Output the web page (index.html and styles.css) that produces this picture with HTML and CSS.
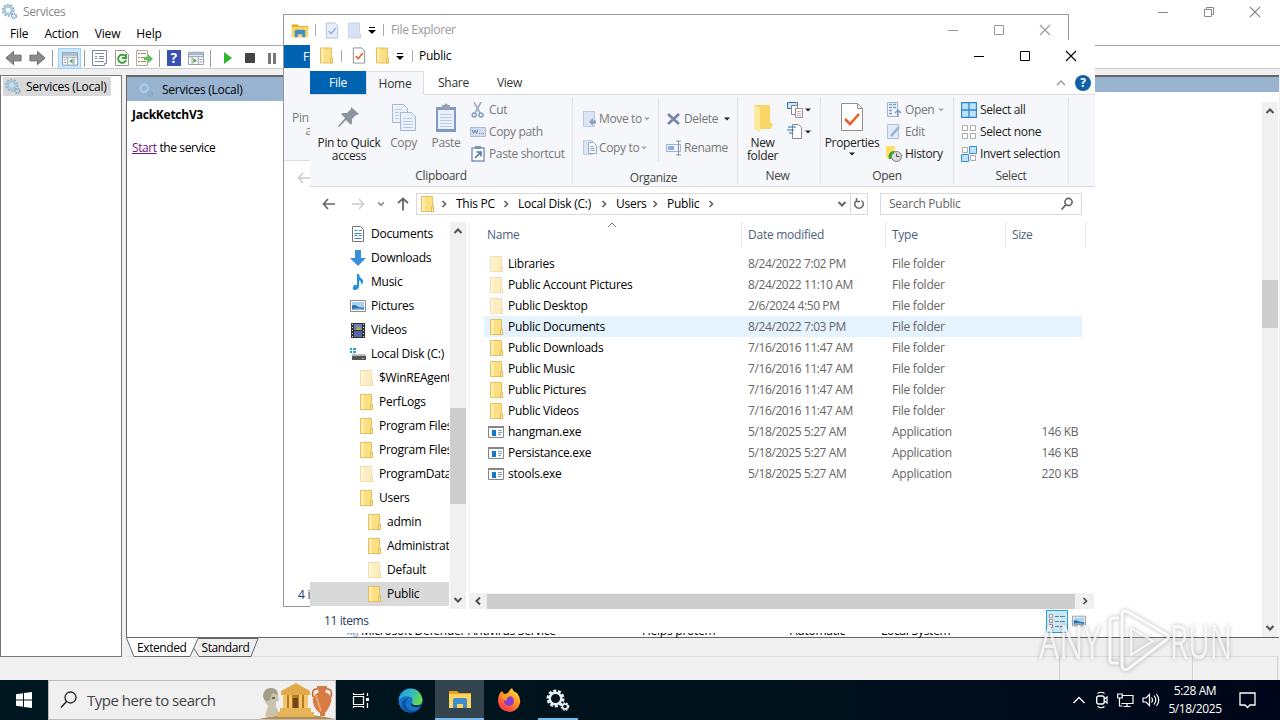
FILE: index.html
```
<!DOCTYPE html>
<html lang="en">

<head>
    <meta charset="UTF-8">
    <meta name="viewport" content="width=device-width, initial-scale=1.0">
    <title>Services</title>
    <link rel="stylesheet" href="styles.css">
</head>

<body>
    <!-- shared icons -->
    <svg class="sprite">
        <symbol id="folder" viewBox="0 0 16 16"><path d="M2.500.500h11v9.500l1 1v4.500h-12z" fill="#fbdf83" stroke="#e3b955" stroke-width=".9"/><path d="M3 1h3v14H3z" fill="#ffecab"/><path d="M12.500 11l1.500-1.500.8 6h-2.300z" fill="#ffeaa5" stroke="#d9aa43" stroke-width=".7"/></symbol>
        <symbol id="gear" viewBox="0 0 18 18"><circle cx="7" cy="7" r="5.800" fill="none" stroke="#8bb0c9" stroke-width="3" stroke-dasharray="2.200 1.400"/><circle cx="7" cy="7" r="4.300" fill="none" stroke="#a9c9de" stroke-width="3"/><circle cx="13.500" cy="13.500" r="2.500" fill="none" stroke="#7fa5bf" stroke-width="2.200" stroke-dasharray="1.300 .8"/></symbol>
        <symbol id="explorer" viewBox="0 0 24 20"><path d="M1 2h8l2 2h12v4H1z" fill="#e8a317"/><path d="M1 5h22v14H1z" fill="#fcd462"/><path d="M5 19v-8q0-2 2-2h10q2 0 2 2v8h-4v-4H9v4z" fill="#3f8ecb"/></symbol>
        <symbol id="check" viewBox="0 0 16 18"><path d="M2 1h9l3 3v13H2z" fill="#fff" stroke="#868b93"/><path d="M4.500 9.500l2.500 3 5-6" fill="none" stroke="#e0642c" stroke-width="1.700"/></symbol>
        <symbol id="check-off" viewBox="0 0 16 18"><path d="M2 1h9l3 3v13H2z" fill="#e6eefa" stroke="#b3c2da"/><path d="M4.500 9.500l2.500 3 5-6" fill="none" stroke="#9db3d8" stroke-width="1.700"/></symbol>
        <symbol id="folder-off" viewBox="0 0 16 16"><path d="M2.500.500h11v9.500l1 1v4.500h-12z" fill="#d6e2f4" stroke="#c3d2ea" stroke-width=".9"/></symbol>
        <symbol id="caret" viewBox="0 0 8 8"><path d="M1 2.500h6L4 5.500z" fill="currentColor"/></symbol>
        <symbol id="qat" viewBox="0 0 8 10"><path d="M1 2h6v1H1zM0 5h8L4 9z" fill="currentColor"/></symbol>
        <symbol id="up" viewBox="0 0 10 10"><path d="M1.500 7L5 3.500 8.500 7" fill="none" stroke="currentColor" stroke-width="2"/></symbol>
        <symbol id="down" viewBox="0 0 10 10"><path d="M1.500 3L5 6.500 8.500 3" fill="none" stroke="currentColor" stroke-width="2"/></symbol>
        <symbol id="right" viewBox="0 0 10 10"><path d="M3.500 2L6.500 5l-3 3" fill="none" stroke="currentColor" stroke-width="1.700"/></symbol>
        <symbol id="left" viewBox="0 0 10 10"><path d="M7 1.500L3.500 5 7 8.500" fill="none" stroke="currentColor" stroke-width="2"/></symbol>
        <symbol id="min" viewBox="0 0 12 12"><path d="M1 6.500h10" stroke="currentColor"/></symbol>
        <symbol id="max" viewBox="0 0 12 12"><path d="M1.500 1.500h9v9h-9z" fill="none" stroke="currentColor"/></symbol>
        <symbol id="restore" viewBox="0 0 12 12"><path d="M1.500 3.500h7v7h-7zM3.500 3.500v-2h7v7h-2" fill="none" stroke="currentColor"/></symbol>
        <symbol id="close" viewBox="0 0 12 12"><path d="M1 1l10 10M11 1L1 11" stroke="currentColor" stroke-width="1.100"/></symbol>
        <symbol id="exe" viewBox="0 0 16 16"><path d="M.5 2.500h15v11H.5z" fill="#fff" stroke="#858585"/><path d="M0 2h16v2H0z" fill="#858585"/><path d="M4 6h4v6H4z" fill="#1479c8"/><path d="M10 6.500h4M10 8.500h4M10 10.500h3" stroke="#7c9fc4"/></symbol>
        <symbol id="picture" viewBox="0 0 16 16"><path d="M.5 2.500h15v11H.5z" fill="#fff" stroke="#8c8c8c"/><path d="M2 4h12v8H2z" fill="#a9d3f3"/><path d="M2 7.500q3-1 5 .5t7 1.500V12H2z" fill="#2d6f9f"/><path d="M2 11q5-2 12 0v1H2z" fill="#7fb0d3"/></symbol>
        <symbol id="copy" viewBox="0 0 26 30"><g fill="#eaf1fb" stroke="#a3b7d5"><path d="M1.500 1.500h11l4 4v14h-15z"/><path d="M9.500 9.500h11l4 4v14h-15z"/></g><path d="M4 6.500h7M4 9.500h4M4 12.500h4M4 15.500h4M12 15.500h9M12 18.500h10M12 21.500h10M12 24.500h10" stroke="#b7c8e2"/></symbol>
        <symbol id="arrow" viewBox="0 0 18 16"><path d="M1 8l8-7v4h8v6H9v4z" fill="#8c8c8c" stroke="#666"/></symbol>
        <symbol id="panel" viewBox="0 0 18 16"><path d="M.5 1.500h17v14H.5z" fill="#fff" stroke="#7e8da4"/><path d="M1 2h16v3H1z" fill="#a9b8ce"/><path d="M1 6.500h16M6.500 7v8M13.500 7v8M2 9.500h3M2 12.500h3" stroke="#7e8da4"/><path d="M12 8v6l-4-3z" fill="#4caf4a"/></symbol>
        <symbol id="lens" viewBox="0 0 14 14"><circle cx="8.500" cy="5" r="3.600" fill="none" stroke="currentColor" stroke-width="1.600"/><path d="M6 7.600L1.500 12.500" stroke="currentColor" stroke-width="1.800"/></symbol>
    </svg>

    <div class="desktop">
        <!-- services console -->
        <div class="console">
            <div class="console-title">
                <svg width="16" height="16"><use href="#gear"/></svg><span>Services</span>
                <div class="controls"><svg><use href="#min"/></svg><svg><use href="#restore"/></svg><svg><use href="#close"/></svg></div>
            </div>
            <div class="menu"><span>File</span><span>Action</span><span>View</span><span>Help</span></div>
            <div class="toolbar">
                <svg width="17" height="16"><use href="#arrow"/></svg>
                <svg class="flip" width="17" height="16"><use href="#arrow"/></svg>
                <i></i>
                <div class="pressed"><svg width="16" height="15"><use href="#panel"/></svg></div>
                <i></i>
                <svg width="16" height="16" viewBox="0 0 16 16"><path d="M.5.500h14v13h-2v2H.5z" fill="#fff" stroke="#77899f"/><path d="M3 3.500h9M3 6.500h2M7 6.500h5M3 8.500h2M7 8.500h5M3 11.500h9" stroke="#8191a6"/></svg>
                <svg width="14" height="16" viewBox="0 0 14 16"><path d="M.5.500h9l4 4v11H.5z" fill="#fff" stroke="#999"/><path d="M10 6a4 4 0 1 0 1 4M11 4v4H7" fill="none" stroke="#3ea53d" stroke-width="2"/></svg>
                <svg width="17" height="16" viewBox="0 0 17 16"><path d="M.5.500h11v15H.5z" fill="#fffbe6" stroke="#aaa"/><path d="M2 3.500h2M5 3.500h5M2 7.500h2M5 7.500h3M2 11.500h2M5 11.500h5" stroke="#889"/><path d="M8 7h4V4l5 5-5 4v-3H8z" fill="#5dc254"/></svg>
                <i></i>
                <svg width="14" height="16" viewBox="0 0 14 16"><rect width="14" height="16" fill="#3750b4"/><text x="3.500" y="13" font-size="14" font-weight="bold" fill="#fff">?</text></svg>
                <svg class="flip" width="16" height="14"><use href="#panel"/></svg>
                <i></i>
                <div class="run">
                    <svg width="8" height="12" viewBox="0 0 8 12"><path d="M0 0l8 6-8 6z" fill="#2fb82f"/></svg>
                    <svg width="10" height="10"><rect width="10" height="10" rx="1" fill="#444"/></svg>
                    <svg width="9" height="11"><path d="M0 0h3v11H0zM5 0h3v11H5z" fill="#777"/></svg>
                </div>
            </div>
            <div class="console-body">
                <div class="scope"><div class="node"><svg width="17" height="16"><use href="#gear"/></svg><span>Services (Local)</span></div></div>
                <div class="result">
                    <div class="result-head">
                        <div class="head-name"><svg width="16" height="16"><use href="#gear"/></svg><span>Services (Local)</span></div>
                        <div class="head-rest"></div>
                    </div>
                    <div class="result-body">
                        <div class="detail">
                            <b>JackKetchV3</b>
                            <p><a>Start</a> the service</p>
                        </div>
                        <div class="services">
                            <div class="service"><svg width="14" height="14"><use href="#gear"/></svg><span class="s1">Microsoft Defender Antivirus Service</span><span class="s2">Helps protem</span><span class="s3">Automatic</span><span>Local System</span></div>
                        </div>
                        <div class="vbar console-bar"><svg><use href="#up"/></svg><div class="thumb"></div><svg><use href="#down"/></svg></div>
                    </div>
                    <div class="sheets">
                        <svg width="140" height="19" viewBox="0 0 140 19"><path d="M0 0l8 18.500h56L71 0z" fill="#fff"/><path d="M.5 0L8 18.500h56L72 .5h60l-7 18H73l-5-8" fill="none" stroke="#666"/></svg>
                        <div class="sheet-names"><span>Extended</span><span>Standard</span></div>
                    </div>
                </div>
            </div>
            <div class="console-status"><i></i><i></i><i></i></div>
        </div>

        <!-- file explorer, behind -->
        <div class="explorer back">
            <div class="back-title">
                <svg width="18" height="15"><use href="#explorer"/></svg><i></i>
                <svg class="dim" width="16" height="17"><use href="#check-off"/></svg>
                <svg class="dim" width="16" height="17"><use href="#folder-off"/></svg>
                <svg class="qat" width="8" height="10"><use href="#qat"/></svg><i></i>
                <span>File Explorer</span>
                <div class="controls"><svg><use href="#min"/></svg><svg><use href="#max"/></svg><svg><use href="#close"/></svg></div>
            </div>
            <div class="back-tab">File</div>
            <div class="back-ribbon">Pin to Quick<br>access</div>
            <div class="back-nav"><svg width="14" height="12" viewBox="0 0 14 12"><path d="M6 1L1.500 6 6 11M2 6h11" fill="none" stroke="#ccc" stroke-width="1.500"/></svg></div>
            <div class="back-status">4 items</div>
        </div>

        <!-- public folder -->
        <div class="explorer front">
            <div class="title">
                <svg width="16" height="17"><use href="#folder"/></svg><i></i>
                <svg width="16" height="17"><use href="#check"/></svg>
                <svg class="title-folder" width="16" height="17"><use href="#folder"/></svg>
                <svg class="qat" width="8" height="10"><use href="#qat"/></svg><i></i>
                <span>Public</span>
                <div class="controls"><svg><use href="#min"/></svg><svg><use href="#max"/></svg><svg><use href="#close"/></svg></div>
            </div>
            <div class="tabs">
                <span class="tab file">File</span><span class="tab home">Home</span><span class="tab">Share</span><span class="tab view">View</span>
                <svg class="collapse" width="10" height="10" viewBox="0 0 10 10"><path d="M1 7l4-4 4 4" fill="none" stroke="#999" stroke-width="1.300"/></svg>
                <div class="help">?</div>
            </div>
            <div class="ribbon">
                <div class="group g-clip">
                    <div class="tools">
                        <div class="big pin"><svg width="24" height="28" viewBox="0 0 24 28"><path d="M14 4l8 7-2 1-1 0-4 4 0 4-1 2-5-5-7 7-1 0 1-2 6-7-4-4 2-1 4 0 4-4 0-1z" fill="#8b949f"/></svg><span>Pin to Quick<br>access</span></div>
                        <div class="big copy off"><svg width="26" height="30"><use href="#copy"/></svg><span>Copy</span></div>
                        <div class="big paste off"><svg width="22" height="30" viewBox="0 0 22 30"><path d="M1 4h20v25H1z" fill="#7f98c4"/><path d="M3 7h16v19H3z" fill="#eaf1fb"/><path d="M7 2h2q2-3 4 0h2v4H7z" fill="#97a3b5"/><path d="M5 11.500h12M5 14.500h12M5 17.500h12M5 20.500h12M5 23.500h12" stroke="#bccbe4"/></svg><span>Paste</span></div>
                        <div class="small off">
                            <div><svg width="16" height="16" viewBox="0 0 16 16"><path d="M4 0l6 11M11 0L5 11" stroke="#9eabbd" stroke-width="1.600"/><circle cx="4.200" cy="13" r="2" fill="none" stroke="#7f9bc9" stroke-width="1.500"/><circle cx="11" cy="13" r="2" fill="none" stroke="#7f9bc9" stroke-width="1.500"/></svg>Cut</div>
                            <div><svg width="16" height="16" viewBox="0 0 16 16"><path d="M.5 3.500h15v9H.5z" fill="#d5e1f3" stroke="#aabcd9"/><path d="M2 5.500l1.500 4L5 6l1.500 3.500L8 5.500M9 9.500h1M11 9.500h1M13 9.500h1" fill="none" stroke="#6983ae"/></svg>Copy path</div>
                            <div><svg width="16" height="16" viewBox="0 0 16 16"><path d="M2 2h12v13H2z" fill="#fff" stroke="#7f98c4" stroke-width="1.500"/><path d="M5 0h6v3H5z" fill="#8391a7"/><path d="M5 12l5-5M6.500 6H11v4.500" fill="none" stroke="#5775ac" stroke-width="1.600"/></svg>Paste shortcut</div>
                        </div>
                    </div>
                    <div class="caption">Clipboard</div>
                </div>
                <div class="group g-org">
                    <div class="tools">
                        <div class="small tall off">
                            <div><svg width="16" height="16" viewBox="0 0 16 16"><path d="M1.500.500h11v15h-11z" fill="#dae5f5" stroke="#bdcce3"/><path d="M7 11l4-4v2.500h3v3h-3V15z" fill="#8fa2c3"/></svg>Move to<svg class="car" width="8" height="8"><use href="#caret"/></svg></div>
                            <div><svg width="16" height="16" viewBox="0 0 16 16"><path d="M1.500.500h9v14h-9z" fill="#dae5f5" stroke="#bdcce3"/><path d="M6.500 2.500h5l3 3v8h-8z" fill="#fff" stroke="#93a8cb"/><path d="M8 6.500h4M8 8.500h5M8 10.500h5" stroke="#93a8cb"/></svg>Copy to<svg class="car" width="8" height="8"><use href="#caret"/></svg></div>
                        </div>
                        <div class="small tall off second">
                            <div><svg width="16" height="16" viewBox="0 0 16 16"><path d="M2 3l11 10M13 3L2 13" stroke="#7886a9" stroke-width="2.800"/></svg>Delete<svg class="car dark" width="8" height="8"><use href="#caret"/></svg></div>
                            <div><svg width="16" height="16" viewBox="0 0 16 16"><path d="M.5 4.500h14v7H.5z" fill="#eef3fb" stroke="#9fb2d1"/><path d="M2 6h6v4H2z" fill="#90aedd"/><path d="M10 1h2.500v14M15 1h-2.500M10 15h5" fill="none" stroke="#8494ad"/></svg>Rename</div>
                        </div>
                    </div>
                    <div class="caption">Organize</div>
                </div>
                <div class="group g-new">
                    <div class="tools">
                        <div class="big newf"><svg width="24" height="29" viewBox="0 0 24 29"><path d="M3 2h16v17l3 2-2 5H3z" fill="#fad667"/><path d="M3 2l6 3v24l-6-3z" fill="#ffeaa0"/></svg><span>New<br>folder</span></div>
                        <div class="small tight">
                            <div><svg width="17" height="16" viewBox="0 0 17 16"><path d="M.5.500h10v6H.5z" fill="#cce6f8" stroke="#2d749b"/><path d="M4.500 3.500h6v9h-6z" fill="#fff" stroke="#888"/><path d="M8.500 6.500h7v9h-7z" fill="#fff" stroke="#a88"/><path d="M10 9.500h4M10 11.500h4M10 13.500h4" stroke="#c9b0b0"/></svg><svg class="car" width="8" height="8"><use href="#caret"/></svg></div>
                            <div><svg width="17" height="16" viewBox="0 0 17 16"><path d="M5.500.500h6l3 3v11h-9z" fill="#fff" stroke="#888"/><path d="M1 3h8M0 6h7M2 9h4" stroke="#2377bb" stroke-width="1.200"/></svg><svg class="car" width="8" height="8"><use href="#caret"/></svg></div>
                        </div>
                    </div>
                    <div class="caption">New</div>
                </div>
                <div class="group g-open">
                    <div class="tools">
                        <div class="big prop"><svg width="22" height="29" viewBox="0 0 22 29"><path d="M.5.500h16l5 5v22H.5z" fill="#fff" stroke="#909090"/><path d="M16.500.500v5h5" fill="none" stroke="#909090"/><path d="M4 16l5 5 9-10" fill="none" stroke="#e86325" stroke-width="2.600"/></svg><span>Properties</span><svg class="car" width="8" height="8"><use href="#caret"/></svg></div>
                        <div class="small">
                            <div class="off"><svg width="16" height="16" viewBox="0 0 16 16"><path d="M1.500.500h10v14h-10z" fill="#eef4fd" stroke="#9fb2d1"/><path d="M3 2.500h3M3 5.500h3M3 8.500h3M3 11.500h3M7 2.500h3M7 5.500h3" stroke="#839ac0" stroke-width="1.500"/><path d="M12 15V9M9 11l3-3 3 3" fill="none" stroke="#839ac0" stroke-width="1.500"/></svg>Open<svg class="car" width="8" height="8"><use href="#caret"/></svg></div>
                            <div class="off"><svg width="16" height="16" viewBox="0 0 16 16"><path d="M1.500.500h11v14h-11z" fill="#e0eaf8" stroke="#afc0da"/><path d="M5 12l8-9" stroke="#9bb1d3" stroke-width="2.400"/></svg>Edit</div>
                            <div><svg width="16" height="16" viewBox="0 0 16 16"><path d="M0 0h9v12H0z" fill="#fce26a"/><circle cx="10.500" cy="10.500" r="5" fill="#ddd" stroke="#777"/><path d="M10.500 7.500v3h3" fill="none" stroke="#555"/><path d="M4 13q-1-6 4-7" fill="none" stroke="#31a031" stroke-width="2.500"/></svg>History</div>
                        </div>
                    </div>
                    <div class="caption">Open</div>
                </div>
                <div class="group g-sel">
                    <div class="tools">
                        <div class="small">
                            <div><svg width="16" height="16" viewBox="0 0 16 16"><path d="M.5.500h15v15H.5zM8 0v16M0 8h16" fill="#bfe2fb" stroke="#2d88cb" stroke-width="1.300"/></svg>Select all</div>
                            <div><svg width="16" height="16" viewBox="0 0 16 16"><path d="M1.500 1.500h5v5h-5zM9.500 1.500h5v5h-5zM1.500 9.500h5v5h-5zM9.500 9.500h5v5h-5z" fill="#fff" stroke="#aaa"/></svg>Select none</div>
                            <div><svg width="16" height="16" viewBox="0 0 16 16"><path d="M1.500 1.500h5v5h-5zM9.500 9.500h5v5h-5z" fill="#fff" stroke="#aaa"/><path d="M8.500.500h7v7h-7zM.5 8.500h7v7h-7z" fill="#bfe2fb" stroke="#3b8fd0"/></svg>Invert selection</div>
                        </div>
                    </div>
                    <div class="caption">Select</div>
                </div>
            </div>
            <div class="nav">
                <svg class="back-arrow" width="14" height="12" viewBox="0 0 14 12"><path d="M6 1L1.500 6 6 11M2 6h11" fill="none" stroke="#666" stroke-width="1.700"/></svg>
                <svg class="fwd-arrow" width="14" height="12" viewBox="0 0 14 12"><path d="M8 1l4.500 5L8 11M12 6H1" fill="none" stroke="#ccc" stroke-width="1.500"/></svg>
                <svg class="recent" width="8" height="8"><use href="#down"/></svg>
                <svg class="up-arrow" width="14" height="14" viewBox="0 0 14 14"><path d="M2 6l5-4.500L12 6M7 2v11.500" fill="none" stroke="#666" stroke-width="1.800"/></svg>
                <div class="address">
                    <svg width="16" height="16"><use href="#folder"/></svg>
                    <div class="crumbs">
                        <svg><use href="#right"/></svg><span class="c1">This PC</span><svg><use href="#right"/></svg><span class="c2">Local Disk (C:)</span><svg><use href="#right"/></svg><span class="c3">Users</span><svg><use href="#right"/></svg><span class="c4">Public</span><svg><use href="#right"/></svg>
                    </div>
                    <svg class="drop" width="10" height="10"><use href="#down"/></svg>
                    <div class="refresh"><svg width="12" height="12" viewBox="0 0 12 12"><path d="M8.500 2.500A4.300 4.300 0 1 1 3.500 2.500M3.500 0v3.500H7" fill="none" stroke="#666" stroke-width="1.500"/></svg></div>
                </div>
                <div class="search"><span>Search Public</span><svg width="14" height="14"><use href="#lens"/></svg></div>
            </div>
            <div class="content">
                <div class="tree">
                    <div class="item"><svg width="16" height="16" viewBox="0 0 16 16"><path d="M2.500.500h8l3 3v12h-11z" fill="#fff" stroke="#777"/><path d="M4.500 4.500h3M9 4.500h3M4.500 7.500h7M4.500 9.500h3M9 9.500h3M4.500 12.500h7" stroke="#3d87bd"/></svg>Documents</div>
                    <div class="item"><svg width="16" height="16" viewBox="0 0 16 16"><path d="M5 0h6v8h5l-8 8-8-8h5z" fill="#3a8edb"/></svg>Downloads</div>
                    <div class="item"><svg width="16" height="16" viewBox="0 0 16 16"><path d="M7 0h2q0 3 3 5t-1 6q1-4-2-4.500V13q-1 3-4 3T3 13q1-3 4-2z" fill="#1f93dc"/></svg>Music</div>
                    <div class="item"><svg width="16" height="16"><use href="#picture"/></svg>Pictures</div>
                    <div class="item"><svg width="16" height="16" viewBox="0 0 16 16"><path d="M1 1h14v15H1z" fill="#333"/><path d="M4 2h8v6H4z" fill="#6484b8"/><path d="M4 9h8v6H4z" fill="#5266a8"/><path d="M8 4l4 4H6z" fill="#c9ab35"/><path d="M2.500 2v14M13.500 2v14" stroke="#ddd" stroke-dasharray="1 2"/></svg>Videos</div>
                    <div class="item"><svg width="16" height="16" viewBox="0 0 16 16"><path d="M0 2h2v2H0zM3 2h3v2H3zM0 5h2v2H0zM3 5h3v2H3z" fill="#22a0dc"/><path d="M2 9l2-1h10l2 2v4H2z" fill="#555"/><path d="M2 9l2-1h10l2 2H2z" fill="#bbb"/><path d="M12 12h2v1h-2z" fill="#7d8"/></svg>Local Disk (C:)</div>
                    <div class="item l2"><svg class="pale"><use href="#folder"/></svg>$WinREAgent</div>
                    <div class="item l2"><svg><use href="#folder"/></svg>PerfLogs</div>
                    <div class="item l2"><svg><use href="#folder"/></svg>Program Files</div>
                    <div class="item l2"><svg><use href="#folder"/></svg>Program Files (x86)</div>
                    <div class="item l2"><svg class="pale"><use href="#folder"/></svg>ProgramData</div>
                    <div class="item l2"><svg><use href="#folder"/></svg>Users</div>
                    <div class="item l3"><svg><use href="#folder"/></svg>admin</div>
                    <div class="item l3"><svg><use href="#folder"/></svg>Administrator</div>
                    <div class="item l3"><svg class="pale"><use href="#folder"/></svg>Default</div>
                    <div class="item l3 selected"><svg><use href="#folder"/></svg>Public</div>
                </div>
                <div class="vbar tree-bar"><svg><use href="#up"/></svg><div class="thumb"></div><svg><use href="#down"/></svg></div>
                <div class="list">
                    <svg class="sort" width="10" height="6" viewBox="0 0 10 6"><path d="M1 5l4-4 4 4" fill="none" stroke="#777"/></svg>
                    <div class="row head"><span class="name">Name</span><span class="date">Date modified</span><span class="type">Type</span><span class="size">Size</span></div>
                    <div class="row"><span class="name"><svg class="pale"><use href="#folder"/></svg>Libraries</span><span class="date">8/24/2022 7:02 PM</span><span class="type">File folder</span></div>
                    <div class="row"><span class="name"><svg class="pale"><use href="#folder"/></svg>Public Account Pictures</span><span class="date">8/24/2022 11:10 AM</span><span class="type">File folder</span></div>
                    <div class="row"><span class="name"><svg class="pale"><use href="#folder"/></svg>Public Desktop</span><span class="date">2/6/2024 4:50 PM</span><span class="type">File folder</span></div>
                    <div class="row hover"><span class="name"><svg><use href="#folder"/></svg>Public Documents</span><span class="date">8/24/2022 7:03 PM</span><span class="type">File folder</span></div>
                    <div class="row"><span class="name"><svg><use href="#folder"/></svg>Public Downloads</span><span class="date">7/16/2016 11:47 AM</span><span class="type">File folder</span></div>
                    <div class="row"><span class="name"><svg><use href="#folder"/></svg>Public Music</span><span class="date">7/16/2016 11:47 AM</span><span class="type">File folder</span></div>
                    <div class="row"><span class="name"><svg><use href="#folder"/></svg>Public Pictures</span><span class="date">7/16/2016 11:47 AM</span><span class="type">File folder</span></div>
                    <div class="row"><span class="name"><svg><use href="#folder"/></svg>Public Videos</span><span class="date">7/16/2016 11:47 AM</span><span class="type">File folder</span></div>
                    <div class="row"><span class="name"><svg><use href="#exe"/></svg>hangman.exe</span><span class="date">5/18/2025 5:27 AM</span><span class="type">Application</span><span class="size">146 KB</span></div>
                    <div class="row"><span class="name"><svg><use href="#exe"/></svg>Persistance.exe</span><span class="date">5/18/2025 5:27 AM</span><span class="type">Application</span><span class="size">146 KB</span></div>
                    <div class="row"><span class="name"><svg><use href="#exe"/></svg>stools.exe</span><span class="date">5/18/2025 5:27 AM</span><span class="type">Application</span><span class="size">220 KB</span></div>
                    <div class="hbar"><svg><use href="#left"/></svg><div class="thumb"></div><svg><use href="#right"/></svg></div>
                </div>
            </div>
            <div class="status">
                <span>11 items</span>
                <div class="mode"><svg width="16" height="16" viewBox="0 0 16 16"><path d="M.5 1.500h3v3h-3zM.5 6.500h3v3h-3zM.5 11.500h3v3h-3z" fill="#fff" stroke="#b08b94"/><path d="M6 3.500h4M11 3.500h5M6 8.500h4M11 8.500h5M6 13.500h4M11 13.500h5" stroke="#6c7c88"/></svg></div>
                <svg width="14" height="14"><use href="#picture"/></svg>
            </div>
        </div>

        <svg class="watermark" width="204" height="72" viewBox="0 0 204 72">
            <g fill="#fff" fill-opacity=".75">
                <text x="6" y="55" font-size="48" textLength="62" lengthAdjust="spacingAndGlyphs">ANY</text>
                <text x="137" y="55" font-size="48" textLength="62" lengthAdjust="spacingAndGlyphs">RUN</text>
            </g>
            <path d="M86 14h-6q-3 0-3 3v39q0 3 3 3h6M89 12q0-7 6-4l38 22q5 3 0 6L95 65q-5 2-6-3z" fill="none" stroke="#fff" stroke-width="3" stroke-opacity=".85"/>
            <path d="M98 24v27l22-14z" fill="#fff" fill-opacity=".25" stroke="#fff" stroke-width="2" stroke-opacity=".8"/>
        </svg>
    </div>

    <div class="taskbar">
        <div class="start"><svg width="16" height="16" viewBox="0 0 16 16"><path d="M0 2.200l7-1v6.300H0zM8 1l8-1v7.500H8zM0 8.500h7v6.300l-7-1zM8 8.500h8V16l-8-1z" fill="#fff"/></svg></div>
        <div class="find">
            <svg width="18" height="18" viewBox="0 0 18 18"><circle cx="10.500" cy="6.500" r="5.500" fill="none" stroke="#222" stroke-width="1.300"/><path d="M6.500 10.500L1 16.500" stroke="#222" stroke-width="1.400"/></svg>
            <span>Type here to search</span>
            <svg class="art" width="76" height="38" viewBox="0 0 76 38">
                <path d="M0 38q38-9 76 0z" fill="#b98b4e"/>
                <path d="M5 16q0-7 7-8 7 0 7 6l1 5-3 2v5l4 7q-8 5-15 2l3-10-3-4z" fill="#c9c3ae"/><path d="M4 15q1-9 9-8 6 1 6 7l-6-2-2 7-4 1q-3-2-3-5z" fill="#a39d87"/><path d="M13 16h3v2h-3z" fill="#6f6a5a"/>
                <path d="M22 10L37 2l14 8v4H22z" fill="#e2a94a"/><path d="M24 14h25v13H24z" fill="#b87722"/><path d="M24 14h4v13h-4zM30 14h3v13h-3zM40 14h3v13h-3zM45 14h4v13h-4z" fill="#f0c56b"/><path d="M34 17h5v10h-5z" fill="#6e4518"/><path d="M21 27h31v4H21zM18 31h37v5H18z" fill="#e6b458"/>
                <path d="M58 5h10v3l-2 3q8 3 6 10-2 7-6 11v3h-5v-3q-6-4-7-11-1-7 6-10l-2-3z" fill="#d77a43"/><path d="M58 8q-6 0-4 8M68 8q6 0 4 8" fill="none" stroke="#c2622e" stroke-width="1.500"/><path d="M57 14l3 10 2 6" fill="none" stroke="#eda36e" stroke-width="2"/>
            </svg>
        </div>
        <div class="app view-app"><svg width="18" height="17" viewBox="0 0 18 17"><path d="M2.500 4.500h10v8h-10zM2.500 1v1.500h10V1M2.500 16v-1.500h10V16M16.500 1v3M16.500 11v5" fill="none" stroke="#fff" stroke-width="1.200"/><path d="M15 6h3v3h-3z" fill="#fff"/></svg></div>
        <div class="app"><svg width="25" height="25" viewBox="0 0 25 25"><defs><linearGradient id="edge-g" x1="0" y1="0" x2="1" y2=".4"><stop offset="0" stop-color="#2098e0"/><stop offset=".6" stop-color="#36bdbf"/><stop offset="1" stop-color="#66d64d"/></linearGradient></defs><circle cx="12.500" cy="12.500" r="12" fill="#1474c9"/><path d="M1 10Q4 .5 13 .5t11.500 11q0 6-7 6-5 0-3.500-3 2-5-3-6Q5 7 1 12z" fill="url(#edge-g)"/><path d="M10 10q-5 6 0 11 5 4 12-1-4 5-11 4.500Q3 21 4 15q1-4 6-5z" fill="#134f9e"/><path d="M14 14.500q-2 4 4 4.500 5 0 6-3-2 2-6 1.500-4 0-4-3z" fill="#001721"/></svg></div>
        <div class="app active"><svg width="24" height="20"><use href="#explorer"/></svg></div>
        <div class="app"><svg width="24" height="24" viewBox="0 0 24 24"><defs><linearGradient id="fox-g" x1=".8" y1="0" x2=".2" y2="1"><stop offset="0" stop-color="#ffe33c"/><stop offset=".5" stop-color="#ff8a20"/><stop offset="1" stop-color="#f62557"/></linearGradient></defs><path d="M3 5l2-2 2 3 4-1q1-3 4-5 1 3 3 4l2 1q4 5 3 10-2 8-10 9Q2 23 1 14 1 8 3 5z" fill="url(#fox-g)"/><circle cx="12" cy="13" r="5" fill="#8a3bd0"/><path d="M5 8q5-2 8 1-4 0-3 3-3 2-5-4z" fill="#ff9a25"/></svg></div>
        <div class="app open"><svg width="24" height="22" viewBox="0 0 24 22"><g fill="none" stroke="#e5edf2"><circle cx="9.500" cy="9.500" r="7.500" stroke-width="3" stroke-dasharray="3 1.700"/><circle cx="9.500" cy="9.500" r="5.800" stroke-width="2.500"/><circle cx="19" cy="17.500" r="3.300" stroke-width="2" stroke-dasharray="1.700 1"/><circle cx="19" cy="17.500" r="2.500" stroke-width="1.500"/></g></svg></div>
        <div class="tray">
            <svg class="more" width="12" height="8" viewBox="0 0 12 8"><path d="M.5 7L6 1.500 11.500 7" fill="none" stroke="#fff" stroke-width="1.400"/></svg>
            <svg width="14" height="18" viewBox="0 0 14 18"><rect x="1.700" y="5" width="7.500" height="8" rx="2" fill="none" stroke="#fff" stroke-width="1.400"/><path d="M9.500 8l2.500-2v6l-2.500-2M2.500 2.500q4-2.500 7 0M2.500 15.500q4 2.500 7 0" fill="none" stroke="#fff" stroke-width="1.200"/></svg>
            <svg width="17" height="15" viewBox="0 0 17 15"><path d="M4.500 2.500h11.500v8H4.500M10 10.500v3M6.500 13.500h7M.7 1h4.500v4H.7zM2.500 5v8h3" fill="none" stroke="#fff" stroke-width="1.200"/></svg>
            <svg width="18" height="14" viewBox="0 0 18 14"><path d="M1 5h3l3.500-3.500v11L4 9H1zM9.500 4.500q2 2.500 0 5M12 2.500q3.500 4.500 0 9M14.500 1q4.500 6 0 12" fill="none" stroke="#fff" stroke-width="1.200"/></svg>
            <div class="clock">5:28 AM<br>5/18/2025</div>
            <svg width="17" height="17" viewBox="0 0 17 17"><path d="M1 1h15v12h-5l-2.500 2.500L6 13H1z" fill="none" stroke="#fff" stroke-width="1.300"/></svg>
        </div>
    </div>
</body>

</html>
```

FILE: styles.css
```
* {
    box-sizing: border-box;
}

body {
    margin: 0;
    width: 1280px;
    height: 720px;
    overflow: hidden;
    font: 12px/16px "Open Sans", "Noto Sans", sans-serif;
    letter-spacing: -.25px;
    color: #000;
    white-space: nowrap;
}

svg {
    display: block;
    flex: none;
}

.sprite {
    position: absolute;
    width: 0;
    height: 0;
}

.desktop {
    position: relative;
    height: 680px;
    overflow: hidden;
}

.controls {
    margin-left: auto;
    display: flex;
    gap: 34px;
}
.controls svg {
    width: 12px;
    height: 12px;
}

/* console */
.console {
    height: 680px;
    display: flex;
    flex-direction: column;
    background: #f0f0f0;
}
.console-title {
    height: 22px;
    background: #fff;
    display: flex;
    align-items: center;
    padding: 1px 19px 0 2px;
    gap: 5px;
    color: #888;
    letter-spacing: -.4px;
}
.menu {
    height: 24px;
    background: #fff;
    border-bottom: 1px solid #aaa;
    display: flex;
    align-items: center;
    padding-left: 10px;
    gap: 16px;
    letter-spacing: -.15px;
}
.toolbar {
    height: 23px;
    background: #fff;
    border-bottom: 1px solid #ccc;
    display: flex;
    align-items: center;
    gap: 7px;
    padding: 2px 0 0 5px;
}
.toolbar i {
    width: 1px;
    height: 17px;
    background: #999;
    margin-left: -1px;
}
.flip {
    transform: scaleX(-1);
}
.pressed {
    width: 23px;
    height: 21px;
    margin: 0 -3px 0 -2px;
    border: 1px solid #99d1ff;
    background: #cce8ff;
    display: flex;
    align-items: center;
    justify-content: center;
}
.run {
    display: flex;
    align-items: center;
    gap: 13px;
    margin-left: 6px;
}
.console-body {
    flex: 1;
    margin-top: 6px;
    display: flex;
    gap: 4px;
}
.scope {
    width: 122px;
    height: 582px;
    border: 1px solid #777;
    background: #fff;
    padding: 1px 2px;
}
.node {
    width: 108px;
    height: 19px;
    background: #d9d9d9;
    display: flex;
    align-items: center;
    gap: 4px;
    padding-left: 2px;
}
.result {
    width: 1153px;
    display: flex;
    flex-direction: column;
}
.result-head {
    border-left: 1px solid #666;
    border-top: 2px solid #666;
    background: #fff;
    height: 26px;
    display: flex;
    align-items: flex-start;
}
.head-name {
    width: 400px;
    height: 24px;
    background: #99b4d1;
    display: flex;
    align-items: center;
    gap: 8px;
    padding: 2px 0 0 11px;
}
.head-rest {
    flex: 1;
    height: 15px;
    background: #99b4d1;
}
.result-body {
    height: 537px;
    border-left: 1px solid #666;
    border-bottom: 1px solid #666;
    background: #fff;
    display: flex;
}
.detail {
    width: 218px;
    padding: 6px 5px;
}
.detail p {
    margin: 17px 0 0;
    letter-spacing: -.4px;
}
.detail a {
    color: #70157d;
    text-decoration: underline;
}
.services {
    flex: 1;
    display: flex;
    align-items: flex-end;
}
.service {
    display: flex;
    align-items: center;
    height: 16px;
    margin-bottom: -2px;
}
.s1 {
    width: 283px;
    padding-left: 2px;
}
.s2 {
    width: 148px;
}
.s3 {
    width: 91px;
}
.vbar {
    width: 16px;
    background: #f0f0f0;
    color: #505050;
    display: flex;
    flex-direction: column;
    align-items: center;
}
.vbar svg {
    width: 10px;
    height: 10px;
    margin: 4px 0;
}
.vbar .thumb {
    width: 16px;
    background: #cdcdcd;
}
.console-bar {
    margin: 1px 1px 0 0;
}
.console-bar .thumb {
    margin: 160px 0 auto;
    height: 48px;
}
.sheets {
    height: 19px;
    position: relative;
    border-bottom: 1px solid #ddd;
}
.sheet-names {
    position: absolute;
    left: 11px;
    top: 2px;
    display: flex;
    gap: 15px;
    letter-spacing: -.4px;
}
.console-status {
    height: 23px;
    display: flex;
    justify-content: flex-end;
}
.console-status i {
    width: 1px;
    background: #d0d0d0;
    margin-left: 132px;
}
.console-status i:last-child {
    margin: 0 2px 0 84px;
}

/* explorer windows */
.explorer {
    position: absolute;
    display: flex;
    flex-direction: column;
    background: #fff;
}
.back {
    left: 283px;
    top: 14px;
    width: 786px;
    height: 593px;
    border: 1px solid #999;
}
.back-title {
    height: 30px;
    display: flex;
    align-items: center;
    padding: 0 17px 0 7px;
    color: #999;
}
.back-title i,
.title i {
    width: 1px;
    height: 12px;
    background: #aaa;
}
.back-title i {
    margin: 0 8px 0 6px;
}
.back-title .dim {
    margin-right: 6px;
}
.qat {
    color: #000;
}
.back-title .qat + i {
    margin: 0 7px;
}
.back-title span {
    letter-spacing: -.35px;
}
.back-tab {
    width: 56px;
    height: 23px;
    background: #0063b1;
    color: #fff;
    line-height: 23px;
    padding-left: 19px;
}
.back-ribbon {
    height: 93px;
    background: #f5f7fa;
    border-bottom: 1px solid #ddd;
    color: #777;
    padding: 43px 0 0 8px;
    line-height: 13px;
    width: 70px;
    text-align: center;
}
.back-nav {
    height: 34px;
    padding: 11px 13px;
}
.back-status {
    margin: auto 0 3px 14px;
    color: #1e3c6b;
}

.front {
    left: 310px;
    top: 40px;
    width: 785px;
    height: 593px;
}
.title {
    height: 31px;
    display: flex;
    align-items: center;
    padding: 0 18px 0 8px;
}
.title i {
    margin: 0 9px 0 7px;
}
.title .title-folder {
    margin-left: 7px;
}
.title .qat {
    margin-left: 6px;
}
.title .qat + i {
    margin: 0 6px 0 8px;
}
.tabs {
    height: 23px;
    display: flex;
    align-items: center;
    color: #333;
}
.tab {
    width: 59px;
    line-height: 24px;
    text-align: center;
}
.tab.file {
    width: 56px;
    height: 23px;
    background: #0063b1;
    color: #fff;
}
.tab.home {
    width: 58px;
    height: 24px;
    background: #f5f7fa;
    border: 1px solid #ddd;
    border-bottom: 0;
    line-height: 23px;
    position: relative;
    z-index: 1;
}
.tab.view {
    width: 53px;
}
.collapse {
    margin-left: auto;
}
.help {
    width: 16px;
    height: 16px;
    border-radius: 50%;
    background: #0f5fa9;
    color: #fff;
    font-weight: bold;
    text-align: center;
    margin: 0 4px 0 9px;
}
.ribbon {
    height: 93px;
    background: #f5f7fa;
    border-top: 1px solid #dadbdc;
    border-bottom: 1px solid #dadbdc;
    display: flex;
    padding: 2px 0;
    color: #222;
    letter-spacing: -.35px;
}
.group {
    border-right: 1px solid #dcdfe3;
    display: flex;
    flex-direction: column;
}
.tools {
    height: 73px;
    display: flex;
    padding-top: 2px;
}
.caption {
    text-align: center;
    color: #444;
}
.g-clip {
    width: 263px;
}
.g-org {
    width: 165px;
}
.g-org .caption {
    padding-right: 3px;
}
.g-new {
    width: 83px;
}
.g-new .caption {
    padding-right: 3px;
}
.g-open {
    width: 133px;
}
.g-sel {
    width: 115px;
}
.big {
    display: flex;
    flex-direction: column;
    align-items: center;
    text-align: center;
    line-height: 13px;
    padding-top: 4px;
}
.big span {
    margin-top: auto;
    height: 32px;
}
.big .car {
    margin-top: -18px;
    margin-bottom: 10px;
}
.off {
    color: #777;
}
.pin {
    width: 66px;
    margin-left: 6px;
}
.copy {
    width: 43px;
}
.paste {
    width: 42px;
    margin-right: 3px;
}
.small > div {
    height: 22px;
    display: flex;
    align-items: center;
    gap: 3px;
}
.off .car {
    color: #aaa;
}
.off .car.dark {
    color: #222;
}
.small.tight > div {
    gap: 0;
}
.tall {
    padding-top: 5px;
}
.tall > div {
    height: 29px;
    gap: 1px;
}
.g-org .tall {
    flex: none;
    padding-left: 9px;
    width: 85px;
}
.g-org .second {
    border-left: 1px solid #dcdfe3;
    padding-left: 7px;
    margin-bottom: 9px;
    width: 79px;
}
.second > div {
    gap: 2px;
}
.second .dark {
    margin-left: 3px;
}
.newf {
    width: 49px;
}
.prop {
    width: 62px;
    margin-right: 3px;
}
.g-sel .small {
    padding-left: 7px;
}

.nav {
    height: 34px;
    display: flex;
    align-items: center;
    padding: 0 12px;
}
.fwd-arrow {
    margin-left: 15px;
}
.recent {
    margin: 0 11px 0 12px;
    color: #888;
}
.address {
    margin-left: 6px;
    width: 452px;
    height: 22px;
    border: 1px solid #d9d9d9;
    display: flex;
    align-items: center;
    padding-left: 2px;
}
.crumbs {
    display: flex;
    align-items: center;
    flex: 1;
    padding-left: 4px;
}
.crumbs svg {
    width: 10px;
    height: 10px;
    color: #666;
}
.crumbs span {
    padding-left: 7px;
}
.c1 {
    width: 52px;
}
.c2 {
    width: 88px;
}
.c3 {
    width: 41px;
}
.c4 {
    width: 46px;
}
.drop {
    color: #666;
}
.refresh {
    width: 17px;
    height: 20px;
    border-left: 1px solid #d9d9d9;
    margin-left: 3px;
    display: flex;
    align-items: center;
    justify-content: center;
}
.search {
    margin-left: 12px;
    width: 202px;
    height: 22px;
    border: 1px solid #d9d9d9;
    display: flex;
    align-items: center;
    justify-content: space-between;
    padding: 0 7px 0 8px;
    color: #666;
}

.content {
    height: 387px;
    display: flex;
    margin-top: 1px;
}
.tree {
    width: 139px;
    margin-right: 1px;
    overflow: hidden;
}
.item {
    height: 24px;
    display: flex;
    align-items: center;
    gap: 5px;
    padding-left: 40px;
}
.item svg {
    width: 16px;
    height: 16px;
}
.l2 {
    padding-left: 48px;
}
.l3 {
    padding-left: 56px;
}
.selected {
    background: #d9d9d9;
}
.pale {
    opacity: .5;
}
.tree-bar .thumb {
    margin: auto 0 87px;
    height: 96px;
}
.list {
    position: relative;
    border-left: 1px solid #f0f0f0;
    margin-left: 3px;
    flex: 1;
    display: flex;
    flex-direction: column;
}
.sort {
    position: absolute;
    left: 137px;
    top: 0;
}
.row {
    height: 21px;
    margin: 0 13px 0 14px;
    display: flex;
    align-items: center;
    color: #666;
}
.row .name {
    width: 264px;
    padding-left: 4px;
    display: flex;
    align-items: center;
    gap: 4px;
    color: #000;
}
.row svg {
    width: 16px;
    height: 16px;
}
.date {
    width: 144px;
    letter-spacing: -.4px;
}
.type {
    width: 120px;
}
.row .size {
    flex: 1;
    text-align: right;
    padding-right: 4px;
    letter-spacing: -.4px;
}
.hover {
    background: #e5f3ff;
}
.head {
    height: 26px;
    margin: 0 9px 5px 14px;
}
.head span,
.head .name {
    height: 26px;
    line-height: 26px;
    color: #4c607a;
    border-right: 1px solid #e5e5e5;
}
.head .name {
    padding-left: 3px;
    width: 258px;
}
.head .date,
.head .type {
    padding-left: 6px;
    letter-spacing: -.25px;
}
.head .size {
    text-align: left;
    padding-left: 6px;
}
.hbar {
    margin-top: auto;
    height: 16px;
    background: #f0f0f0;
    display: flex;
    align-items: center;
    color: #505050;
    margin-right: 1px;
}
.hbar svg {
    width: 10px;
    height: 10px;
    margin: 0 4px 0 3px;
}
.hbar .thumb {
    flex: 1;
    height: 15px;
    background: #cdcdcd;
}
.hbar .thumb + svg {
    margin-left: 5px;
}
.status {
    height: 24px;
    display: flex;
    align-items: center;
    padding: 0 9px 0 14px;
    color: #1e3c6b;
    letter-spacing: -.4px;
}
.mode {
    margin: 0 4px 0 auto;
    width: 22px;
    height: 23px;
    border: 1px solid #26a0da;
    background: #cbe8f6;
    display: flex;
    align-items: center;
    justify-content: center;
}

.watermark {
    position: absolute;
    left: 1033px;
    top: 604px;
    letter-spacing: 0;
    filter: drop-shadow(0 0 2px rgba(0, 0, 0, .35));
}

/* taskbar */
.taskbar {
    height: 40px;
    background: linear-gradient(90deg, #001720, #00121c 60%, #000619);
    display: flex;
    color: #fff;
}
.start {
    width: 48px;
    display: flex;
    align-items: center;
    justify-content: center;
}
.find {
    width: 288px;
    background: #f0f0f0;
    border: 1px solid #bbb;
    color: #444;
    display: flex;
    align-items: center;
    padding-left: 11px;
    font-size: 15px;
    letter-spacing: -.5px;
}
.find span {
    margin-left: 9px;
}
.art {
    margin-left: auto;
}
.app {
    width: 49px;
    display: flex;
    align-items: center;
    justify-content: center;
}
.view-app {
    width: 50px;
    padding-right: 3px;
}
.active {
    background: #35454f;
    border-bottom: 2px solid #76b9ed;
}
.open {
    background: linear-gradient(#76b9ed, #76b9ed) bottom / 40px 2px no-repeat;
}
.tray {
    margin-left: auto;
    display: flex;
    align-items: center;
    padding-right: 24px;
    gap: 8px;
}
.more {
    margin-right: 2px;
}
.clock {
    text-align: center;
    line-height: 18px;
    width: 58px;
    margin: 0 7px 0 -2px;
    letter-spacing: -.4px;
}
```
